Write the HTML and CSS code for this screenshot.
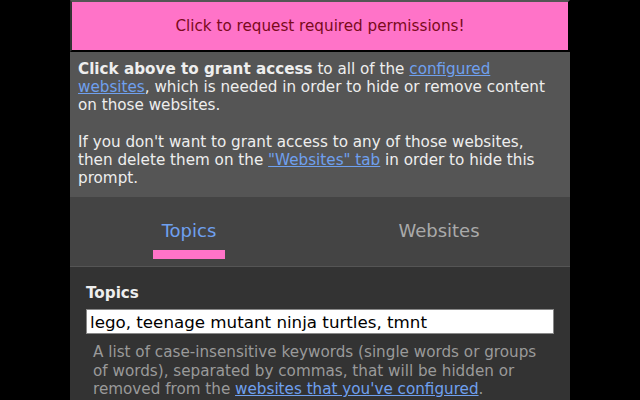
FILE: index.html
```html
<!DOCTYPE html>
<html>
<head>
<meta charset="utf-8">
<link rel="stylesheet" href="styles.css">
</head>
<body>
<div class="panel">
  <button class="perm-btn">Click to request required permissions!</button>
  <div class="notice">
    <p><b>Click above to grant access</b> to all of the <a href="#">configured websites</a>, which is needed in order to hide or remove content on those websites.</p>
    <p>If you don't want to grant access to any of those websites, then delete them on the <a href="#">"Websites" tab</a> in order to hide this prompt.</p>
  </div>
  <div class="tabs">
    <div class="tab active"><span class="tab-label">Topics</span></div>
    <div class="tab"><span class="tab-label">Websites</span></div>
  </div>
  <div class="content">
    <label class="field-label">Topics</label>
    <input class="field-input" type="text" value="lego, teenage mutant ninja turtles, tmnt">
    <p class="help">A list of case-insensitive keywords (single words or groups of words), separated by commas, that will be hidden or removed from the <a href="#">websites that you've configured</a>.</p>
  </div>
</div>
</body>
</html>
```
FILE: styles.css
```css
html, body {
  margin: 0;
  padding: 0;
  background: #000;
  overflow: hidden;
  height: 100%;
}
body {
  font-family: "DejaVu Sans", Verdana, sans-serif;
  font-size: 15.2px;
  line-height: 18px;
  color: #eee;
}
.panel {
  width: 500px;
  margin: 0 auto;
  background: #333;
  min-height: 100%;
}
.perm-btn {
  display: block;
  width: 100%;
  height: 52px;
  margin: 0;
  background: #ff73c8;
  color: #7a0a1a;
  font-family: "DejaVu Sans", Verdana, sans-serif;
  font-size: 15.2px;
  border-style: solid;
  border-width: 2px;
  border-color: #555 #000 #000 #333;
  padding: 0;
  cursor: pointer;
}
.notice {
  background: #555;
  padding: 8px 15px 10px 8px;
}
.notice p {
  margin: 0;
}
.notice p + p {
  margin-top: 19px;
}
a {
  color: #6fa0ef;
  text-decoration: underline;
}
.tabs {
  display: flex;
  background: #444;
  border-bottom: 1px solid #555;
  height: 69px;
}
.tab {
  flex: 1;
  display: flex;
  justify-content: center;
  padding-right: 12px;
}
.tab-label {
  font-size: 18px;
  line-height: 20px;
  color: #aaa;
  padding: 24px 9px 0;
  height: 37px;
  box-sizing: content-box;
}
.tab.active .tab-label {
  color: #6fa0ef;
  border-bottom: 9px solid #ff73c8;
  height: 29px;
}
.content {
  padding: 16px 16px 0;
}
.field-label {
  display: block;
  font-weight: bold;
  font-size: 15.2px;
  line-height: 18px;
  margin-top: 1px;
  color: #eee;
}
.field-input {
  display: block;
  box-sizing: border-box;
  width: 468px;
  height: 25px;
  margin-top: 7px;
  padding: 1px 3px;
  border: 1px solid #888;
  background: #fff;
  color: #000;
  font-family: "DejaVu Sans", Verdana, sans-serif;
  font-size: 16.7px;
}
.help {
  margin: 9px 0 0;
  padding: 0 8px 0 7px;
  color: #9a9a9a;
  line-height: 18.5px;
}
```
